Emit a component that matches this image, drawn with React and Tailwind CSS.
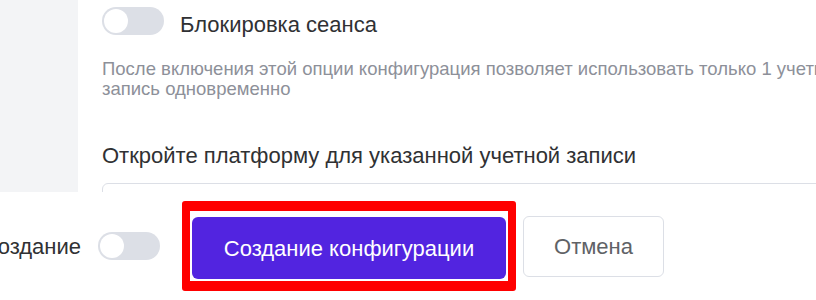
import React from 'react';

function Toggle() {
  return (
    <div className="w-[62px] h-[28px] rounded-full bg-[#dcdfe6] p-[2px] flex items-center shrink-0">
      <div className="w-[24px] h-[24px] rounded-full bg-white"></div>
    </div>
  );
}

function App() {
  return (
    <div className="w-[816px] h-[300px] overflow-hidden bg-white [font-family:'Liberation_Sans',Arial,sans-serif]">
      {/* Form body */}
      <div className="flex h-[192px] overflow-hidden">
        <div className="w-[78px] shrink-0 bg-[#f3f4f6]"></div>
        <div className="flex-1 pl-[24px] pt-[7px]">
          <div className="flex items-start gap-[16px]">
            <Toggle />
            <span className="mt-[5px] text-[22px] leading-[25px] text-[#303133] whitespace-nowrap">Блокировка сеанса</span>
          </div>
          <p className="mt-[22px] text-[18.5px] leading-[20px] text-[#8d9099] whitespace-nowrap">
            После включения этой опции конфигурация позволяет использовать только 1 учетную
            <br />
            запись одновременно
          </p>
          <div className="mt-[44px] text-[22px] leading-[26px] text-[#303133] whitespace-nowrap">
            Откройте платформу для указанной учетной записи
          </div>
          <div className="mt-[14px] h-[40px] border border-[#dcdfe6] rounded-[6px]"></div>
        </div>
      </div>

      {/* Footer */}
      <div className="h-[108px] flex items-center">
        <div className="w-[81px] shrink-0 flex justify-end">
          <span className="text-[22px] text-[#303133] whitespace-nowrap">Создание</span>
        </div>
        <div className="ml-[17px]">
          <Toggle />
        </div>
        <div className="ml-[22px] border-x-[8px] border-y-[10px] border-[#ff0000] rounded-[3px] pt-[6px] px-[2px] pb-[2px]">
          <button className="w-[314px] h-[62px] rounded-[6px] bg-[#5224e0] text-white text-[22px]">
            Создание конфигурации
          </button>
        </div>
        <button className="ml-[7px] w-[141px] h-[61px] rounded-[6px] border border-[#dcdfe6] bg-white text-[22px] text-[#606266]">
          Отмена
        </button>
      </div>
    </div>
  );
}

export default App;
